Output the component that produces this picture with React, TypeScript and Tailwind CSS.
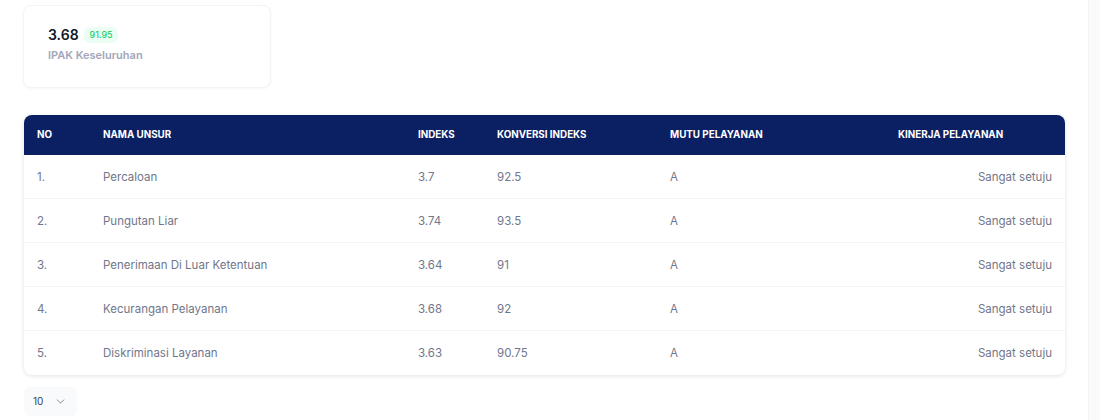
import React from "react";
import { ChevronDown } from "lucide-react";

const rows = [
  { no: "1.", nama: "Percaloan", indeks: "3.7", konversi: "92.5", mutu: "A", kinerja: "Sangat setuju" },
  { no: "2.", nama: "Pungutan Liar", indeks: "3.74", konversi: "93.5", mutu: "A", kinerja: "Sangat setuju" },
  { no: "3.", nama: "Penerimaan Di Luar Ketentuan", indeks: "3.64", konversi: "91", mutu: "A", kinerja: "Sangat setuju" },
  { no: "4.", nama: "Kecurangan Pelayanan", indeks: "3.68", konversi: "92", mutu: "A", kinerja: "Sangat setuju" },
  { no: "5.", nama: "Diskriminasi Layanan", indeks: "3.63", konversi: "90.75", mutu: "A", kinerja: "Sangat setuju" },
];

const App = () => {
  return (
    <div className="flex h-[420px] w-[1100px] overflow-hidden bg-white font-['Inter',sans-serif]">
      <div className="flex-1 pl-6 pr-[23px]">
        {/* Summary card */}
        <div className="mt-[5px] w-[248px] h-[83px] -ml-px rounded-lg border border-gray-100 bg-white px-6 pt-[19px] shadow-[0_1px_3px_rgba(0,0,0,0.04)]">
          <div className="flex items-center gap-[5px]">
            <span className="text-[14px] font-semibold leading-5 text-gray-900">3.68</span>
            <span className="rounded-md bg-[#ecfdf3] px-[6px] py-[2px] text-[9px] leading-3 text-green-500">
              91.95
            </span>
          </div>
          <div className="mt-[2px] text-[11px] font-semibold leading-4 text-[#a2a6b8]">IPAK Keseluruhan</div>
        </div>

        {/* Table */}
        <div className="mt-[27px] overflow-hidden rounded-lg bg-white shadow-[0_1px_4px_rgba(0,0,0,0.12)]">
          <div className="grid h-10 grid-cols-[66px_315px_79px_173px_228px_1fr] items-center bg-[#0b1f63] px-[13px] text-[9.8px] font-bold uppercase text-white">
            <div>No</div>
            <div>Nama Unsur</div>
            <div>Indeks</div>
            <div>Konversi Indeks</div>
            <div>Mutu Pelayanan</div>
            <div>Kinerja Pelayanan</div>
          </div>
          {rows.map((r, i) => (
            <div
              key={r.no}
              className={
                "grid h-11 grid-cols-[66px_315px_79px_173px_228px_1fr] items-center px-[13px] pt-[2px] text-[11.5px] text-[#71768b]" +
                (i < rows.length - 1 ? " border-b border-gray-100" : "")
              }
            >
              <div>{r.no}</div>
              <div>{r.nama}</div>
              <div>{r.indeks}</div>
              <div>{r.konversi}</div>
              <div>{r.mutu}</div>
              <div className="text-right">{r.kinerja}</div>
            </div>
          ))}
        </div>

        {/* Page size */}
        <div className="mt-3 flex h-[29px] w-[53px] items-center gap-[11px] rounded-md bg-gray-50 pl-[9px] text-[10px] text-gray-700">
          <span>10</span>
          <ChevronDown className="size-[13px] text-gray-500" strokeWidth={1.5} />
        </div>
      </div>
      <div className="w-3 border-l border-gray-100 bg-[#fafafa]" />
    </div>
  );
};

export default App;
